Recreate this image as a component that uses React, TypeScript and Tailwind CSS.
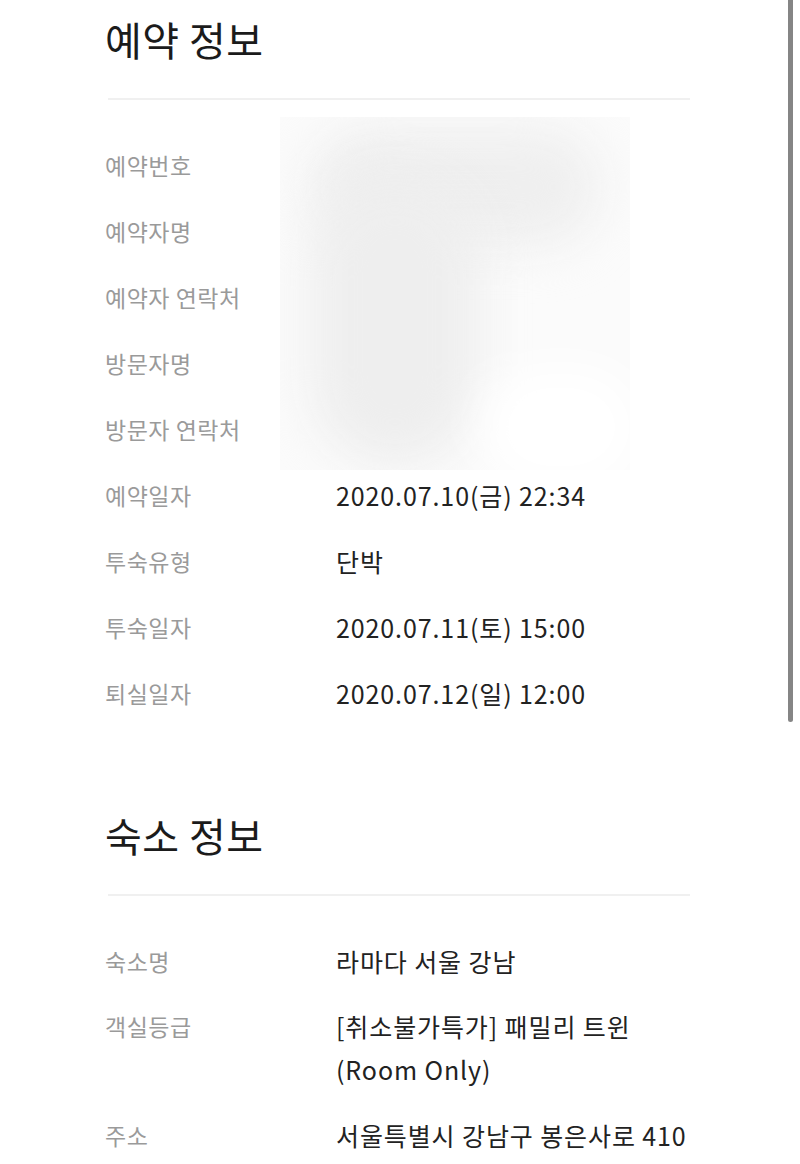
import React from "react";

const bookingRows = [
  { label: "예약번호", value: "" },
  { label: "예약자명", value: "" },
  { label: "예약자 연락처", value: "" },
  { label: "방문자명", value: "" },
  { label: "방문자 연락처", value: "" },
  { label: "예약일자", value: "2020.07.10(금) 22:34" },
  { label: "투숙유형", value: "단박" },
  { label: "투숙일자", value: "2020.07.11(토) 15:00" },
  { label: "퇴실일자", value: "2020.07.12(일) 12:00" },
];

function Row({ label, children }: { label: string; children?: React.ReactNode }) {
  return (
    <div className="flex py-[11px] leading-[44px]">
      <div className="w-[231px] shrink-0 text-[23px] tracking-[0.5px] text-[#9a9a9a]">{label}</div>
      <div className="text-[25px] tracking-[0.9px] text-[#222]">{children}</div>
    </div>
  );
}

function Heading({ children }: { children: React.ReactNode }) {
  return (
    <>
      <h2 className="text-[40px] leading-[50px] tracking-[0.5px] text-[#1b1b1b] font-normal">{children}</h2>
      <div className="mt-[34px] ml-[3px] h-[2px] bg-[#f0f0f0]" />
    </>
  );
}

export default function App() {
  return (
    <div
      className="relative w-[800px] h-[1164px] overflow-hidden bg-white"
      style={{ fontFamily: '"Noto Sans CJK KR", "Noto Sans", sans-serif' }}
    >
      <div className="w-[585px] ml-[105px] pt-[14px]">
        <Heading>예약 정보</Heading>
        <div className="pt-[32px]">
          {bookingRows.map((r) => (
            <Row key={r.label} label={r.label}>
              {r.value}
            </Row>
          ))}
        </div>

        <div className="mt-[84px]">
          <Heading>숙소 정보</Heading>
        </div>
        <div className="pt-[32px]">
          <Row label="숙소명">라마다 서울 강남</Row>
          <div className="flex py-[11px] leading-[43px]">
            <div className="w-[231px] shrink-0 text-[23px] tracking-[0.5px] text-[#9a9a9a]">객실등급</div>
            <div className="text-[25px] tracking-[0.9px] text-[#222]">
              [취소불가특가] 패밀리 트윈
              <br />
              (Room Only)
            </div>
          </div>
          <Row label="주소">서울특별시 강남구 봉은사로 410</Row>
        </div>
      </div>

      {/* blurred redaction */}
      <div className="absolute left-[280px] top-[117px] w-[350px] h-[353px] overflow-hidden bg-[#fbfbfb]">
        <div className="absolute left-[30px] top-[10px] w-[290px] h-[120px] rounded-full bg-[#efefef] blur-xl" />
        <div className="absolute left-[30px] top-[60px] w-[170px] h-[290px] rounded-full bg-[#eeeeee] blur-xl" />
        <div className="absolute left-[200px] top-[250px] w-[160px] h-[120px] rounded-full bg-white blur-xl" />
      </div>

      {/* scrollbar */}
      <div className="absolute left-[788px] top-0 w-[5px] h-[722px] rounded-b-full bg-[#858585]" />
    </div>
  );
}
